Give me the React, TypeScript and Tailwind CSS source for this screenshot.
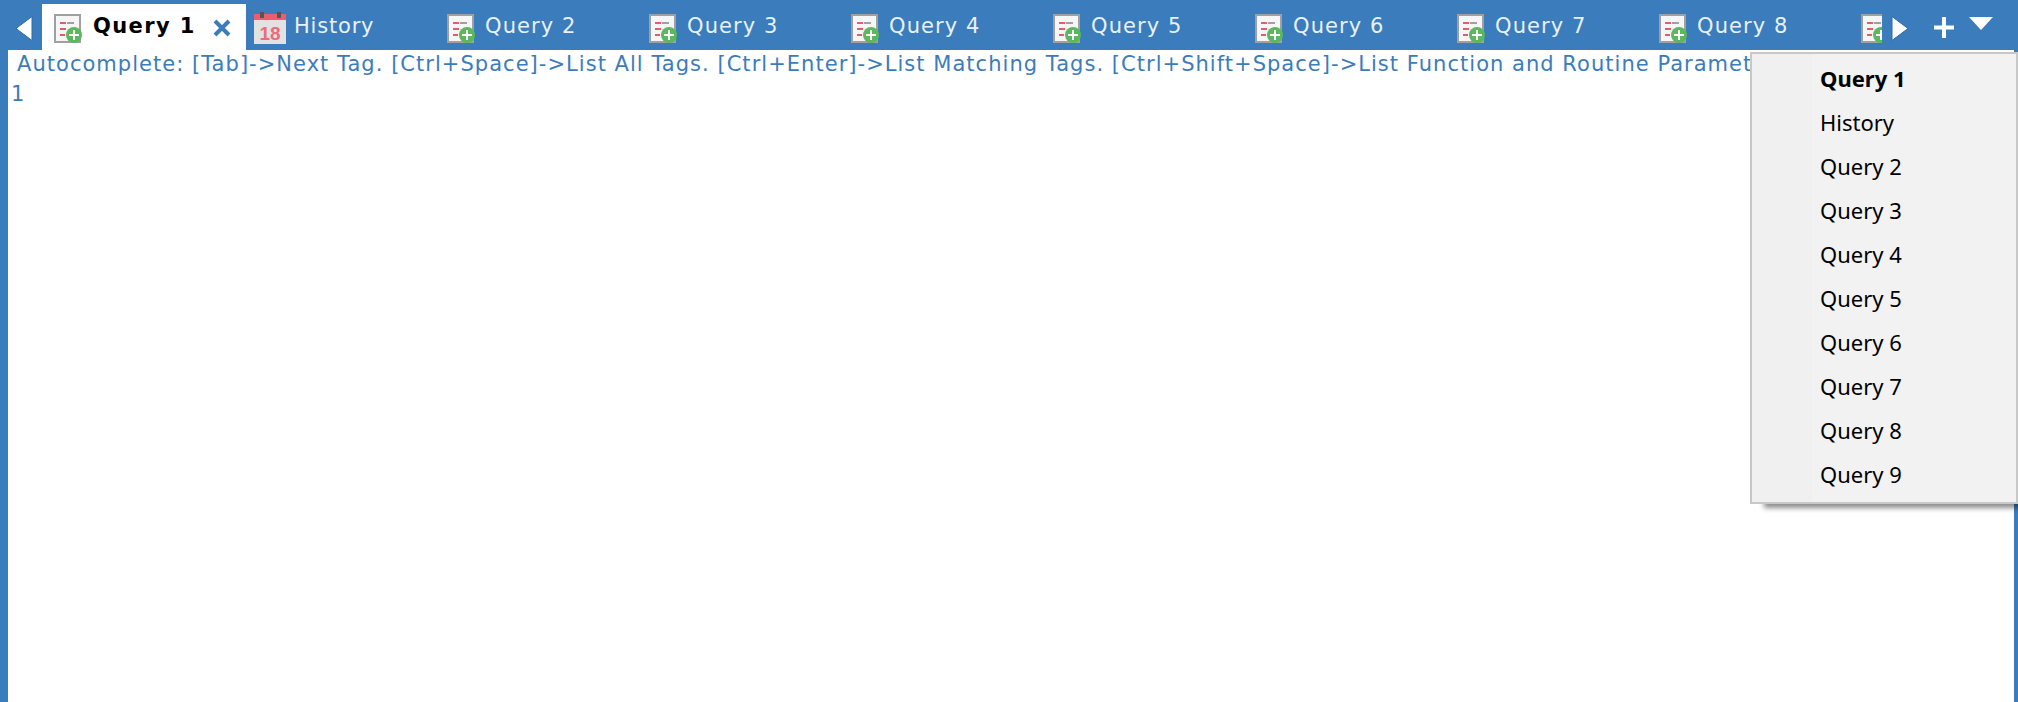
import React from "react";

const QueryIcon = ({ className = "" }: { className?: string }) => (
  <svg width="28" height="29" viewBox="0 0 28 29" className={`shrink-0 ${className}`} shapeRendering="crispEdges">
    <rect x="1" y="1" width="25" height="27" fill="#f6f6f6" stroke="#a0a0a0" strokeWidth="2" />
    <rect x="6" y="8" width="6" height="2" fill="#ea5a6e" />
    <rect x="13" y="8" width="7" height="2" fill="#a0a0a0" />
    <rect x="6" y="14" width="6" height="2" fill="#ea5a6e" />
    <rect x="6" y="20" width="5" height="2" fill="#ea5a6e" />
    <circle cx="20" cy="21" r="8" fill="#5cb85c" shapeRendering="auto" />
    <rect x="19" y="16" width="2.4" height="10" fill="#fff" />
    <rect x="15" y="20" width="10" height="2.4" fill="#fff" />
  </svg>
);

const CalendarIcon = () => (
  <svg width="32" height="32" viewBox="0 0 32 32" className="shrink-0" shapeRendering="crispEdges">
    <rect x="0" y="6" width="32" height="26" fill="#e2e2e2" />
    <rect x="0" y="2" width="32" height="6" fill="#ee5c70" />
    <rect x="6" y="0" width="4" height="6" fill="#555" />
    <rect x="23" y="0" width="4" height="6" fill="#555" />
    <text x="16" y="28" textAnchor="middle" fontSize="19" fontWeight="700" fill="#ee6a7c" fontFamily="'Liberation Sans', sans-serif">18</text>
  </svg>
);

const others = ["Query 2", "Query 3", "Query 4", "Query 5", "Query 6", "Query 7", "Query 8"];
const menu = ["History", "Query 2", "Query 3", "Query 4", "Query 5", "Query 6", "Query 7", "Query 8", "Query 9"];

export default function App() {
  return (
    <div className="relative h-[702px] w-[2018px] overflow-hidden bg-[#3b7cbc] font-['DejaVu_Sans',sans-serif]">
      <div className="flex h-[50px] items-start">
        <div className="flex h-[50px] w-[42px] shrink-0 items-center pl-[15px] pt-[6px]">
          <svg width="18" height="25" viewBox="0 0 18 25"><path d="M17 0.5V24.5L1 12.5Z" fill="#fff" stroke="#2f6ba8" strokeWidth="1" /></svg>
        </div>
        <div className="mt-[4px] flex h-[46px] w-[204px] shrink-0 items-center bg-white pl-[12px] pt-[3px]">
          <QueryIcon />
          <span className="-mt-[3px] ml-[11px] w-[119px] text-[21px] font-bold tracking-[1.4px] text-black">Query 1</span>
          <svg width="20" height="20" viewBox="0 0 20 20" className="-mt-[2px]"><path d="M3 3L17 17M17 3L3 17" stroke="#3b7cbc" strokeWidth="4" /></svg>
        </div>
        <div className="flex h-[50px] w-[201px] shrink-0 items-center pl-[8px] pt-[6px]">
          <CalendarIcon />
          <span className="-mt-[3px] ml-[8px] text-[21px] tracking-[0.8px] text-[#e8f1fa]">History</span>
        </div>
        <div className="flex min-w-0 flex-1 overflow-hidden">
          {others.map((q) => (
            <div key={q} className="flex h-[50px] w-[202px] shrink-0 items-center pt-[7px]">
              <QueryIcon />
              <span className="-mt-[3px] ml-[10px] text-[21px] tracking-[1.1px] text-[#e8f1fa]">{q}</span>
            </div>
          ))}
          <div className="flex h-[50px] shrink-0 items-center pt-[7px]">
            <QueryIcon />
          </div>
        </div>
        <div className="flex h-[50px] w-[136px] shrink-0 items-start pl-[9px] pt-[16px]">
          <svg width="18" height="25" viewBox="0 0 18 25"><path d="M1 0.5V24.5L17 12.5Z" fill="#fff" stroke="#2f6ba8" strokeWidth="1" /></svg>
          <svg width="20" height="21" viewBox="0 0 20 21" className="ml-[25px] mt-[1px]"><path d="M10 0V21M0 10.5H20" stroke="#fff" strokeWidth="4" /></svg>
          <svg width="26" height="14" viewBox="0 0 26 14" className="ml-[14px] mt-[1px]"><path d="M1 0H25L13 13Z" fill="#fff" /></svg>
        </div>
      </div>
      <div className="ml-[8px] mr-[4px] h-[652px] overflow-hidden bg-white pl-[9px] text-[21px] leading-[29px] tracking-[1.03px] text-[#3b7cbc]">
        <div className="whitespace-nowrap">Autocomplete: [Tab]-&gt;Next Tag. [Ctrl+Space]-&gt;List All Tags. [Ctrl+Enter]-&gt;List Matching Tags. [Ctrl+Shift+Space]-&gt;List Function and Routine Parameters.</div>
        <div className="-ml-[6px] mt-[1px]">1</div>
      </div>
      <div className="absolute left-[1750px] top-[52px] flex h-[452px] w-[268px] border-2 border-[#c8c8c8] bg-[#f2f2f2] font-['Noto_Sans',sans-serif] text-[22px] text-black shadow-[12px_6px_5px_-2px_rgba(0,0,0,0.45)]">
        <div className="h-full w-[60px] shrink-0 bg-[#f0f0f0]" />
        <div className="flex-1 pl-[8px] pt-[2px]">
          <div className="flex h-[44px] items-center font-bold">Query 1</div>
          {menu.map((m) => (
            <div key={m} className="flex h-[44px] items-center">{m}</div>
          ))}
        </div>
      </div>
    </div>
  );
}
